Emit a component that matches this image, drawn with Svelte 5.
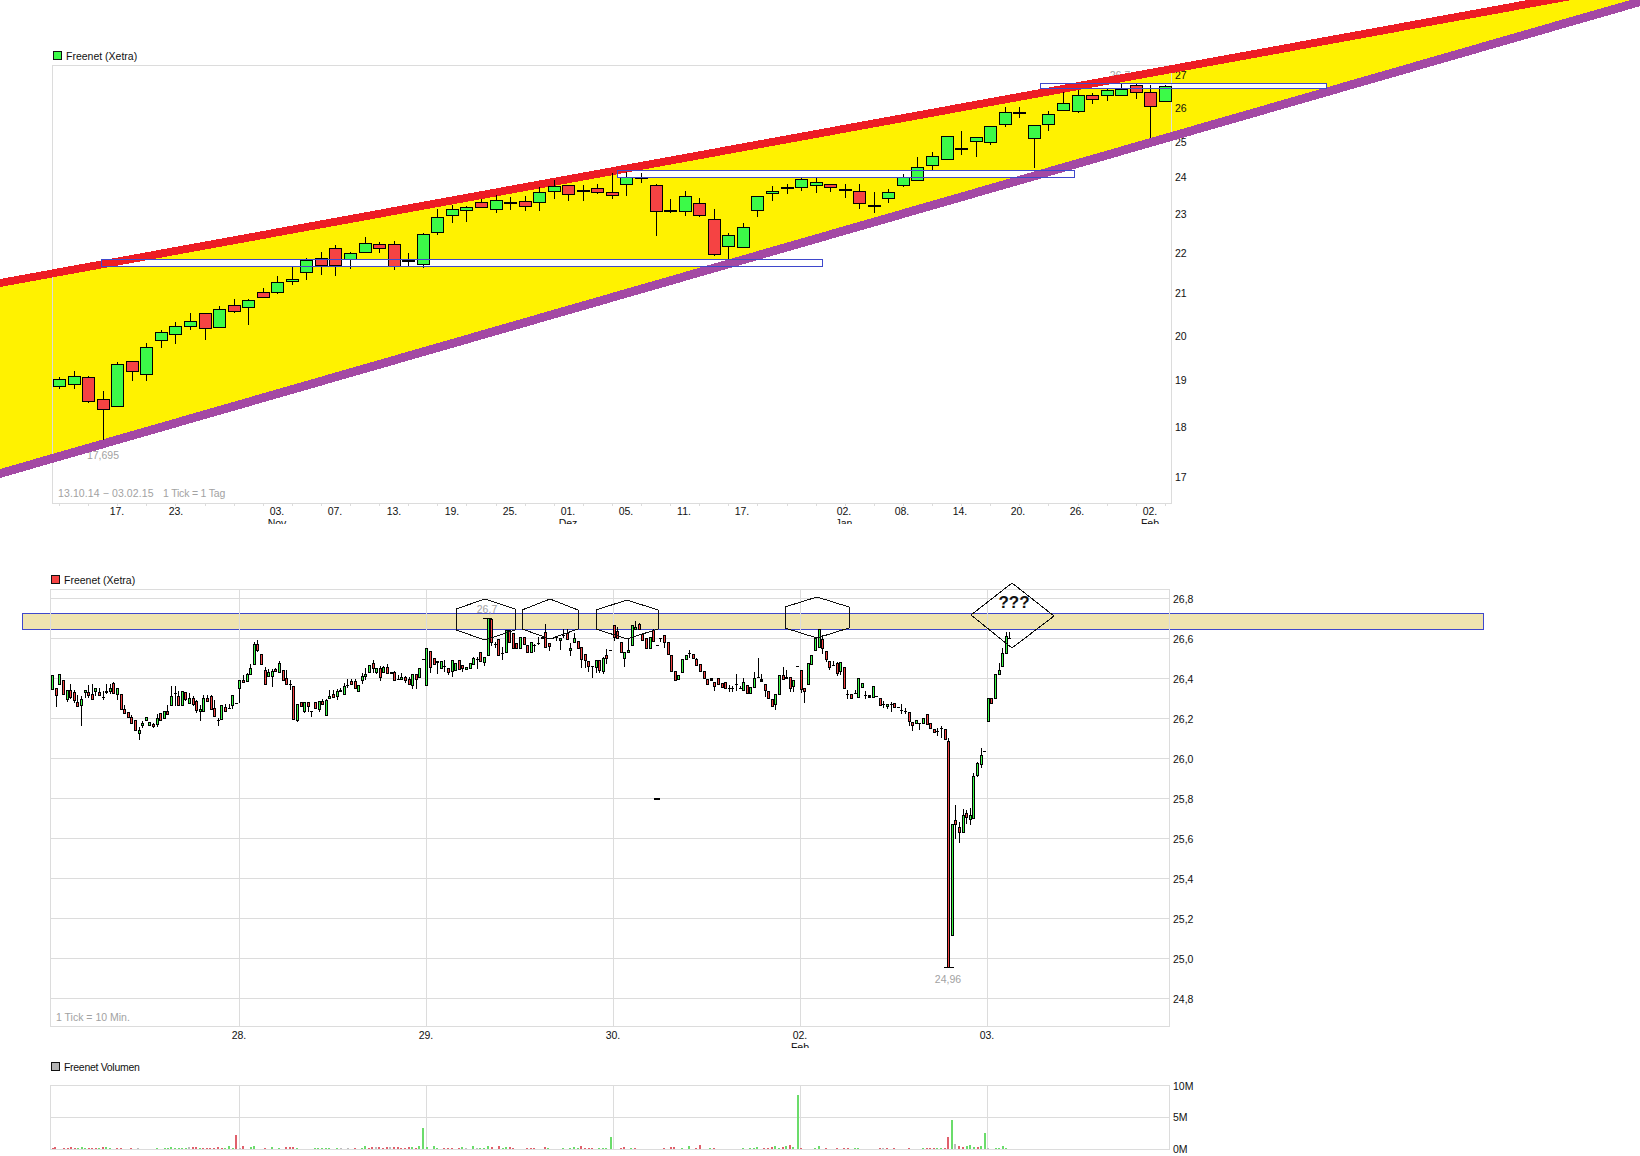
<script>
	// [colour, high, body top, body bottom, low]; k = doji, drawn as a black dash
	const daily = [
		['g',377,379,386,389],['g',371,376,384,389],['r',376,377,401,403],['r',391,399,409,440],['g',362,364,406,406],
		['r',361,361,371,381],['g',343,347,374,381],['g',330,332,340,348],['g',322,326,334,344],['g',313,321,326,330],
		['r',313,313,328,340],['g',306,309,327,327],['r',299,305,311,313],['g',299,300,307,325],['r',288,292,297,298],
		['g',276,282,292,294],['g',267,279,281,285],['g',258,260,272,280],['r',252,258,265,275],['r',245,248,265,276],
		['g',252,253,259,269],['g',237,243,252,252],['r',242,244,248,253],['r',241,244,266,270],['g',253,260,261,266],
		['g',233,234,264,268],['g',209,217,232,235],['g',205,209,215,223],['g',206,207,210,222],['r',199,202,207,207],
		['g',195,200,209,213],['k',197,202,203,210],['r',196,201,206,211],['g',187,192,202,211],['g',180,186,191,199],
		['r',185,185,194,201],['k',185,190,191,201],['r',184,188,192,194],['r',173,192,195,199],['g',172,177,184,196],
		['k',173,177,178,183],['r',184,185,211,236],['k',199,210,211,213],['g',191,196,211,216],['r',198,203,215,217],
		['r',209,219,254,256],['g',233,235,246,260],['g',223,227,247,248],['g',196,196,210,217],['g',186,191,193,201],
		['k',184,187,188,194],['g',178,179,187,191],['g',178,182,185,193],['r',184,184,187,192],['k',184,189,190,198],
		['r',184,191,203,209],['k',192,205,206,213],['g',189,192,198,203],['g',174,177,185,187],['g',157,167,180,181],
		['g',152,156,165,170],['g',136,136,159,160],['k',131,148,149,155],['g',137,137,141,157],['g',126,126,142,145],
		['g',107,112,124,127],['k',107,112,113,118],['g',125,125,138,168],['g',111,114,124,131],['g',92,103,110,111],
		['g',90,95,111,113],['r',93,95,99,104],['g',88,90,95,101],['g',83,89,95,95],['r',84,85,92,99],
		['r',85,92,106,138],['g',85,86,101,102]
	];

	const intraday = [
		['g',675,675,689,689],['r',688,688,695,706],['g',674,674,684,684],['r',680,680,694,694],['g',690,690,699,701],
		['r',684,690,697,698],['r',690,692,700,702],['r',695,702,706,706],['g',696,699,705,725],['g',690,690,692,697],
		['r',685,692,695,697],['r',684,694,699,699],['g',688,688,691,695],['r',688,692,695,695],['k',691,697,697,699],
		['g',684,691,692,693],['g',684,688,691,693],['r',682,683,693,693],['g',688,688,694,699],['r',694,694,709,709],
		['r',705,709,713,713],['r',712,712,717,717],['r',715,717,723,723],['r',720,720,730,730],['g',727,730,733,739],
		['g',721,723,725,727],['g',717,717,720,720],['g',722,722,725,725],['r',723,724,726,727],['g',714,718,724,726],
		['r',713,713,720,720],['g',711,711,718,718],['r',705,711,714,714],['g',686,696,705,705],['k',686,693,693,705],
		['r',691,696,705,705],['g',691,691,705,705],['r',692,692,699,700],['g',693,698,703,703],['r',696,698,704,705],
		['r',700,701,710,712],['g',705,709,711,720],['g',695,698,711,711],['r',695,698,701,701],['r',695,696,709,709],
		['r',700,708,716,716],['k',718,720,720,725],['g',705,705,719,719],['r',704,707,711,711],['k',704,708,708,708],
		['g',695,695,705,708],['k',703,703,703,703],['g',680,680,688,702],['r',675,680,682,682],['g',673,674,681,681],
		['g',664,668,674,674],['g',642,644,664,664],['r',640,644,650,651],['r',654,654,664,664],['r',667,670,684,684],
		['g',669,672,676,676],['g',669,671,676,686],['r',668,669,671,671],['g',661,663,672,672],['r',670,670,680,680],
		['r',670,678,684,684],['k',680,684,684,689],['r',686,686,719,719],['g',704,704,720,721],['r',702,702,706,706],
		['g',702,702,711,712],['r',702,702,706,711],['k',711,711,711,716],['r',702,702,708,708],['g',701,701,709,711],
		['r',699,701,704,704],['g',699,700,715,715],['g',690,696,698,698],['r',690,694,697,697],['g',689,691,696,699],
		['g',688,690,691,691],['g',683,686,694,694],['k',679,685,685,687],['r',679,681,684,684],['r',679,681,688,688],
		['g',685,685,691,691],['g',673,676,680,683],['g',668,674,676,679],['g',665,665,672,672],['r',660,663,668,672],
		['g',668,668,672,673],['r',666,668,677,680],['g',666,667,672,672],['r',664,667,673,673],['g',672,672,673,673],
		['r',671,672,680,680],['k',675,679,679,679],['g',673,677,679,679],['r',676,677,680,682],['r',677,679,684,684],
		['g',674,674,685,688],['r',674,674,679,688],['g',668,668,677,677],['k',659,659,659,659],['g',648,648,685,685],
		['r',651,651,667,672],['r',658,658,664,664],['g',661,661,662,673],['g',661,661,668,668],['k',660,666,666,671],
		['r',668,668,672,674],['g',660,660,671,676],['g',663,663,670,670],['r',660,660,669,669],['r',665,665,668,671],
		['g',667,667,669,669],['g',663,663,668,668],['g',657,658,664,664],['k',657,659,659,668],['r',652,652,661,661],
		['g',657,657,662,665],['g',618,618,655,655],['r',619,619,642,645],['k',642,644,644,647],['r',639,639,655,655],
		['k',647,653,653,659],['g',630,630,652,652],['r',630,630,642,642],['r',633,633,648,648],['r',643,643,648,648],
		['g',637,637,648,648],['r',637,637,644,644],['r',645,645,652,652],['g',642,642,652,652],['k',644,645,645,651],
		['k',637,643,643,644],['k',637,637,638,638],['r',624,632,647,647],['r',643,643,646,650],['k',638,638,638,638],
		['k',637,637,637,640],['g',638,638,640,649],['k',629,635,635,637],['r',629,633,639,639],['g',643,648,650,655],
		['g',633,638,642,642],['r',641,641,648,648],['r',647,647,659,667],['r',654,654,660,667],['r',661,661,666,671],
		['k',666,666,666,677],['g',660,660,667,672],['r',660,660,670,672],['g',657,658,671,673],['r',649,655,658,663],
		['k',650,650,650,650],['r',625,625,637,640],['r',627,631,638,638],['r',642,642,652,652],['g',652,652,658,666],
		['g',639,650,652,652],['g',625,625,645,645],['g',621,627,629,629],['r',623,624,629,629],['r',634,634,640,640],
		['r',638,638,648,648],['g',637,637,648,648],['r',629,630,641,641],['k',645,645,645,645],['k',638,638,638,641],
		['r',635,635,642,647],['r',642,642,654,654],['r',655,655,671,671],['r',671,671,680,680],['g',675,675,679,679],
		['g',659,659,672,672],['g',655,655,659,659],['k',650,653,653,657],['r',654,654,658,658],['r',658,659,665,665],
		['r',664,664,671,671],['r',671,671,678,678],['r',679,679,684,684],['k',678,678,680,680],['r',682,682,686,690],
		['r',678,678,684,684],['r',683,683,687,687],['r',682,682,688,688],['k',685,688,688,691],['k',686,688,688,691],
		['k',674,684,684,690],['k',686,688,688,688],['g',678,682,690,690],['r',685,685,693,693],['g',687,687,693,693],
		['g',672,678,687,687],['k',658,677,677,677],['k',674,679,681,681],['r',684,684,690,696],['r',691,691,698,698],
		['r',699,699,706,706],['g',694,694,704,709],['g',675,675,694,694],['r',667,675,679,679],['k',670,677,678,678],
		['r',677,677,688,691],['g',680,680,686,691],['k',666,666,666,666],['r',670,670,689,692],['r',688,688,691,702],
		['g',663,663,684,684],['g',655,655,664,664],['g',638,638,650,650],['g',629,629,647,647],['r',635,639,648,653],
		['r',651,651,659,661],['r',661,661,667,669],['k',661,665,665,665],['r',662,663,673,675],['g',662,662,671,674],
		['r',667,667,688,688],['k',690,694,694,698],['r',694,694,698,698],['k',690,693,693,693],['g',678,678,697,697],
		['g',683,683,687,687],['k',691,695,695,698],['k',695,695,697,697],['g',686,686,697,697],['k',696,696,696,696],
		['r',698,698,705,705],['k',701,704,704,707],['g',704,704,706,708],['k',702,704,704,711],['r',703,703,707,707],
		['k',707,707,707,707],['k',704,710,710,713],['k',708,711,711,713],['r',712,712,721,725],['r',722,722,725,730],
		['g',720,720,723,723],['k',723,723,723,729],['g',718,718,723,723],['r',714,714,724,724],['r',723,723,728,728],
		['r',729,729,732,732],['k',728,731,731,735],['k',726,728,728,737],['r',729,729,739,739],['r',738,741,967,967],
		['g',824,824,935,935],['r',805,820,824,838],['r',822,827,832,842],['g',809,815,832,832],['r',810,813,817,823],
		['g',808,815,819,824],['g',773,776,818,818],['g',762,763,775,776],['g',748,755,764,767],['k',751,751,751,751],
		['g',698,698,721,721],['r',698,698,703,703],['g',674,674,698,698],['g',663,670,674,674],['g',648,653,666,666],
		['g',632,636,653,653],['k',632,638,638,638]
	];

	// position on the zoomed strip, bar height in px, colour
	const volumes = [
		[3,1,'r'],[7,2,'r'],[20,1,'r'],[26,1,'r'],[31,2,'r'],[37,1,'r'],[42,1,'g'],[48,2,'g'],[53,1,'g'],[59,1,'r'],[65,1,'r'],[70,1,'r'],
		[76,1,'g'],[81,2,'r'],[87,2,'g'],[93,1,'g'],[104,1,'r'],[109,1,'r'],[126,1,'r'],[137,1,'n'],[166,1,'g'],[178,1,'g'],[183,1,'g'],
		[188,2,'g'],[194,1,'g'],[200,1,'g'],[205,1,'g'],[211,1,'g'],[217,2,'n'],[222,2,'r'],[228,2,'r'],[233,1,'g'],[239,1,'r'],[245,1,'r'],
		[250,1,'r'],[256,1,'r'],[262,2,'r'],[268,1,'r'],[273,1,'g'],[279,3,'g'],[285,1,'g'],[290,14,'r'],[296,1,'n'],[301,3,'r'],[313,2,'g'],
		[318,3,'g'],[335,1,'r'],[346,2,'g'],[357,1,'g'],[369,2,'r'],[374,2,'r'],[380,2,'r'],[385,1,'g'],[414,1,'g'],[419,1,'g'],[425,1,'g'],
		[431,1,'g'],[436,1,'g'],[448,1,'g'],[454,1,'n'],[465,1,'n'],[476,1,'r'],[487,1,'g'],[493,3,'g'],[498,1,'r'],[504,2,'r'],[510,2,'n'],
		[515,2,'r'],[521,1,'r'],[527,2,'r'],[532,2,'n'],[538,2,'r'],[544,2,'r'],[549,1,'r'],[555,1,'r'],[561,2,'r'],[566,2,'g'],[572,1,'r'],
		[577,3,'g'],[583,21,'g'],[589,2,'g'],[600,3,'g'],[606,1,'g'],[617,1,'r'],[623,1,'r'],[628,1,'r'],[640,1,'r'],[645,2,'g'],[651,1,'n'],
		[662,3,'g'],[668,1,'n'],[673,1,'g'],[679,1,'g'],[685,3,'g'],[691,2,'r'],[702,3,'r'],[708,1,'g'],[713,2,'g'],[719,2,'r'],[724,1,'r'],
		[747,1,'r'],[752,1,'r'],[758,1,'r'],[775,2,'r'],[780,1,'g'],[803,1,'g'],[814,1,'g'],[820,2,'g'],[826,1,'g'],[831,3,'r'],[837,1,'r'],
		[843,1,'r'],[848,1,'r'],[859,1,'g'],[865,1,'g'],[870,1,'g'],[878,12,'g'],[893,1,'r'],[899,2,'r'],[910,1,'g'],[916,1,'r'],[961,1,'r'],
		[972,2,'r'],[977,2,'r'],[989,1,'g'],[1000,3,'g'],[1012,1,'r'],[1017,4,'r'],[1034,1,'g'],[1040,1,'r'],[1085,1,'g'],[1096,1,'g'],
		[1102,1,'g'],[1107,2,'g'],[1118,1,'r'],[1124,1,'r'],[1130,2,'r'],[1135,3,'g'],[1141,1,'g'],[1147,2,'r'],[1152,3,'g'],[1158,4,'r'],
		[1164,2,'g'],[1171,54,'g'],[1176,1,'r'],[1198,1,'g'],[1204,3,'g'],[1215,1,'r'],[1232,1,'r'],[1243,1,'r'],[1249,1,'r'],[1260,1,'g'],
		[1266,1,'g'],[1300,1,'r'],[1305,1,'n'],[1311,1,'r'],[1322,1,'r'],[1345,1,'r'],[1368,1,'g'],[1373,1,'r'],[1379,1,'r'],[1385,1,'r'],
		[1390,1,'g'],[1396,1,'g'],[1402,1,'r'],[1407,12,'r'],[1412,29,'g'],[1418,5,'n'],[1424,3,'r'],[1430,2,'r'],[1436,3,'g'],[1441,4,'g'],
		[1447,2,'g'],[1453,2,'r'],[1458,3,'g'],[1464,16,'g'],[1469,1,'n'],[1481,1,'g'],[1486,1,'g'],[1492,3,'g'],[1497,1,'g']
	];

	const dailyPrices = [['27',75],['26',108],['25',142],['24',177],['23',214],['22',253],['21',293],['20',336],['19',380],['18',427],['17',477]];
	const dailyDates = [['17.',117],['23.',176],['03.',277,'Nov'],['07.',335],['13.',394],['19.',452],['25.',510],['01.',568,'Dez'],['05.',626],['11.',684],['17.',742],['02.',844,'Jan'],['08.',902],['14.',960],['20.',1018],['26.',1077],['02.',1150,'Feb']];
	const dailyBoxes = [[101,259,721,7],[617,170,457,7],[1040,83,286,5]];

	const priceLevels = ['26,8','26,6','26,4','26,2','26,0','25,8','25,6','25,4','25,2','25,0','24,8'].map((label, i) => [label, 598 + i * 40]);
	const days = [['28.',239],['29.',426],['30.',613],['02.',800,'Feb'],['03.',987]];
	const hexagons = [
		'456,609 485,599 515,609 515,630 485,640 456,630',
		'522,610 550,599 578,610 578,629 550,639 522,629',
		'596,610 627,600 658,610 658,629 627,639 596,629',
		'785,607 817,597 849,607 849,628 817,638 785,628'
	];
	const ticks = Array.from({ length: 39 }, (_, i) => Math.round(59 + i * 29.1));

	const dailyX = (i) => Math.round(59 + i * 14.55);
	const intradayX = (i) => Math.round(52.3 + i * 3.598);
	const volumeX = (pos) => Math.round(50 + pos / 1.568);
</script>

<main class="page">
	<svg class="chart" width="1640" height="524" viewBox="0 0 1640 524">
		<polygon class="yellow" points="0,283 1640,-16.5 1640,1.7 0,473.5" />
		{#each dailyBoxes as [x, y, w, h]}
			<rect class="clear" {x} {y} width={w} height={h} />
		{/each}

		<rect class="legend green" x="53.5" y="51.5" width="8" height="8" />
		<text class="label" x="66" y="60">Freenet (Xetra)</text>
		<rect class="frame" x="52.5" y="65.5" width="1119" height="438" />
		{#each ticks as x}
			<rect class="grid-fill" {x} y="504" width="1" height="2" />
		{/each}
		{#each dailyPrices as [label, y]}
			<text class="label" x="1175" y={y + 4}>{label}</text>
		{/each}
		{#each dailyDates as [label, x, month]}
			<text class="label middle" {x} y="515">{label}</text>
			{#if month}
				<text class="label middle" {x} y="527">{month}</text>
			{/if}
		{/each}
		<text class="note dates" x="58" y="497">13.10.14 − 03.02.15</text>
		<text class="note tick" x="163" y="497">1 Tick = 1 Tag</text>
		<text class="note middle" x="103" y="459">17,695</text>
		<text class="note middle" x="1120" y="79">26,7</text>

		<polygon class="red-line" points="0,279 1640,-20.5 1640,-12.5 0,287" />
		<polygon class="purple-line" points="0,469 1640,-2.8 1640,6.2 0,478" />

		{#each daily as [c, hi, top, bot, lo], i}
			{@const x = dailyX(i)}
			<rect class="ink" {x} y={hi} width="1" height={lo - hi} />
			<rect class="ink" x={x - 6} y={top} width="13" height={bot - top + 1} />
			{#if c !== 'k'}
				<rect class={c === 'g' ? 'up' : 'down'} x={x - 5} y={top + 1} width="11" height={bot - top - 1} />
			{/if}
		{/each}
		{#each dailyBoxes as [x, y, w, h]}
			<rect class="outline" x={x + 0.5} y={y + 0.5} width={w} height={h} />
		{/each}
	</svg>

	<svg class="chart" width="1640" height="524" viewBox="0 524 1640 524">
		<rect class="legend red" x="51.5" y="575.5" width="8" height="8" />
		<text class="label" x="64" y="584">Freenet (Xetra)</text>

		<rect class="band" x="22.5" y="613.5" width="1461" height="16" />
		<rect class="frame" x="50.5" y="589.5" width="1119" height="437" />
		{#each priceLevels as [label, y]}
			<line class="grid" x1="50" x2="1170" y1={y + 0.5} y2={y + 0.5} />
			<text class="label" x="1173" y={y + 5}>{label}</text>
		{/each}
		{#each days as [label, x, month]}
			<line class="grid" x1={x + 0.5} x2={x + 0.5} y1="589" y2="1027" />
			<text class="label middle" {x} y="1039">{label}</text>
			{#if month}
				<text class="label middle" {x} y="1051">{month}</text>
			{/if}
		{/each}
		<text class="note" x="56" y="1021">1 Tick = 10 Min.</text>
		<text class="note middle" x="487" y="613">26,7</text>
		<text class="note middle" x="948" y="983">24,96</text>

		{#each intraday as [c, hi, top, bot, lo], i}
			{@const x = intradayX(i)}
			<rect class="ink" {x} y={hi} width="1" height={lo - hi + 1} />
			<rect class="ink" x={x - 1} y={top} width="3" height={bot - top + 1} />
			{#if c !== 'k'}
				<rect class={c === 'g' ? 'up' : 'down'} {x} y={top + 1} width="1" height={bot - top - 1} />
			{/if}
		{/each}
		<rect class="ink" x="944" y="967" width="10" height="1" />
		<rect class="ink" x="483" y="618" width="9" height="1" />
		<rect class="ink" x="654" y="798" width="6" height="2" />

		{#each hexagons as points}
			<polygon class="shape" {points} />
		{/each}
		<polygon class="shape" points="971,615 1012,583 1054,616 1012,648" />
		<text class="question" x="1014" y="608">???</text>
	</svg>

	<svg class="chart" width="1640" height="108" viewBox="0 1048 1640 108">
		<rect class="legend grey" x="51.5" y="1062.5" width="8" height="8" />
		<text class="label volume" x="64" y="1071">Freenet Volumen</text>
		<rect class="frame" x="50.5" y="1085.5" width="1119" height="64" />
		<line class="grid" x1="50" x2="1170" y1="1117.5" y2="1117.5" />
		{#each days as [, x]}
			<line class="grid" x1={x + 0.5} x2={x + 0.5} y1="1085" y2="1150" />
		{/each}
		<text class="label" x="1173" y="1090">10M</text>
		<text class="label" x="1173" y="1121">5M</text>
		<text class="label" x="1173" y="1153">0M</text>
		{#each volumes as [pos, h, c]}
			<rect class="vol-{c}" x={volumeX(pos)} y={1149 - h} width="2" height={h} />
		{/each}
	</svg>
</main>

<style>
	:global(body) {
		background: #fff;
	}

	.page {
		display: flex;
		flex-direction: column;
		width: 1640px;
		height: 1156px;
		overflow: hidden;
		background: #fff;
	}

	.chart {
		display: block;
		flex: none;
		shape-rendering: crispEdges;
	}

	text {
		font-family: 'Liberation Sans', Arial, sans-serif;
		font-size: 10.5px;
	}

	.label {
		fill: #111;
	}

	.volume {
		letter-spacing: -0.3px;
	}

	.note {
		fill: #a2a2a2;
	}

	.dates {
		letter-spacing: 0.1px;
	}

	.tick {
		letter-spacing: -0.2px;
	}

	.middle {
		text-anchor: middle;
	}

	.question {
		fill: #111;
		font-size: 17px;
		font-weight: 700;
		text-anchor: middle;
	}

	.yellow {
		fill: #fff200;
	}

	.red-line {
		fill: #ed1c24;
	}

	.purple-line {
		fill: #a349a4;
	}

	.clear {
		fill: #fff;
	}

	.outline {
		fill: none;
		stroke: #3f48cc;
		stroke-width: 1;
	}

	.band {
		fill: #efe4b0;
		stroke: #3f48cc;
		stroke-width: 1;
	}

	.frame {
		fill: none;
		stroke: #dcdcdc;
		stroke-width: 1;
	}

	.grid {
		stroke: #dcdcdc;
		stroke-width: 1;
	}

	.grid-fill {
		fill: #dcdcdc;
	}

	.legend {
		stroke: #111;
		stroke-width: 1;
	}

	.legend.green {
		fill: #3cfa48;
	}

	.legend.red {
		fill: #f54343;
	}

	.legend.grey {
		fill: #b4b4b4;
	}

	.ink {
		fill: #000;
	}

	.up {
		fill: #3cfa48;
	}

	.down {
		fill: #f54343;
	}

	.shape {
		fill: none;
		stroke: #111;
		stroke-width: 1;
	}

	.vol-g {
		fill: #6bdc6b;
	}

	.vol-r {
		fill: #e0606c;
	}

	.vol-n {
		fill: #bcbcbc;
	}
</style>
